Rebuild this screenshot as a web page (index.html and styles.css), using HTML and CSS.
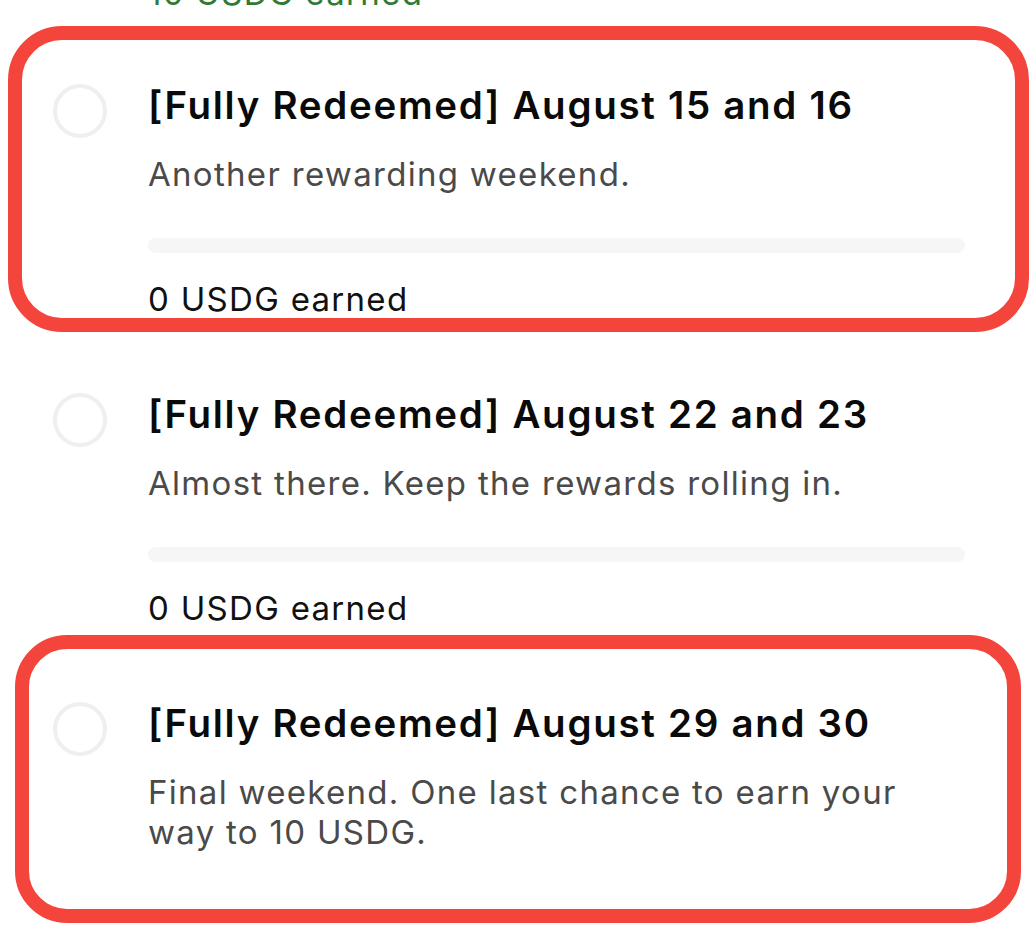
FILE: index.html
```html
<!DOCTYPE html>
<html lang="en">
<head>
<meta charset="utf-8">
<title>Weekend rewards</title>
<link rel="stylesheet" href="styles.css">
</head>
<body>
<div class="page">
  <div class="prev-earned">10 USDG earned</div>
  <ul class="list">
    <li class="item">
      <span class="radio"></span>
      <div class="body">
        <h3 class="title">[Fully Redeemed] August 15 and 16</h3>
        <p class="sub">Another rewarding weekend.</p>
        <div class="bar"></div>
        <p class="earned">0 USDG earned</p>
      </div>
    </li>
    <li class="item">
      <span class="radio"></span>
      <div class="body">
        <h3 class="title">[Fully Redeemed] August 22 and 23</h3>
        <p class="sub">Almost there. Keep the rewards rolling in.</p>
        <div class="bar"></div>
        <p class="earned">0 USDG earned</p>
      </div>
    </li>
    <li class="item">
      <span class="radio"></span>
      <div class="body">
        <h3 class="title">[Fully Redeemed] August 29 and 30</h3>
        <p class="sub">Final weekend. One last chance to earn your<br>way to 10 USDG.</p>
      </div>
    </li>
  </ul>
  <div class="mark mark-one"></div>
  <div class="mark mark-two"></div>
</div>
</body>
</html>
```
FILE: styles.css
```css
html, body {
  margin: 0;
  padding: 0;
  background: #ffffff;
}
body {
  font-family: Inter, "Noto Sans", "Liberation Sans", sans-serif;
  color: #111111;
  overflow: hidden;
}
.page {
  position: relative;
  width: 1030px;
  height: 937px;
  overflow: hidden;
}
.prev-earned {
  margin-top: -27px;
  padding-left: 148px;
  font-size: 33px;
  line-height: 40px;
  letter-spacing: 1.3px;
  color: #2f7a34;
}
.list {
  list-style: none;
  margin: 70px 0 0 0;
  padding: 0;
  display: flex;
  flex-direction: column;
  gap: 73px;
}
.item {
  display: flex;
  align-items: flex-start;
  padding-left: 53px;
  gap: 41px;
}
.radio {
  flex: none;
  box-sizing: border-box;
  width: 54px;
  height: 54px;
  margin-top: 1px;
  border: 4px solid #efefef;
  border-radius: 50%;
}
.body {
  width: 817px;
  display: flex;
  flex-direction: column;
}
.title {
  margin: 0;
  font-size: 38.5px;
  line-height: 44px;
  font-weight: 600;
  letter-spacing: 1.7px;
  color: #0a0a0a;
  white-space: nowrap;
}
.sub {
  margin: 27px 0 0 0;
  font-size: 33px;
  line-height: 40px;
  font-weight: 400;
  letter-spacing: 1.3px;
  color: #4a4a4a;
}
.bar {
  margin-top: 44px;
  height: 15px;
  border-radius: 8px;
  background: #f6f6f6;
}
.earned {
  margin: 26px 0 0 0;
  font-size: 33px;
  line-height: 40px;
  letter-spacing: 1.3px;
  color: #111111;
}
.mark {
  position: absolute;
  box-sizing: border-box;
  border: 14px solid #f3453c;
}
.mark-one {
  left: 8px;
  top: 26px;
  width: 1021px;
  height: 306px;
  border-radius: 54px;
}
.mark-two {
  left: 15px;
  top: 635px;
  width: 1006px;
  height: 288px;
  border-radius: 52px;
}
```
